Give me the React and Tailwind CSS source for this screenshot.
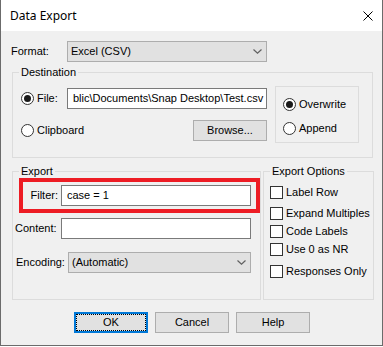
import { useState } from 'react';

// Windows-style "Data Export" dialog
const font = "font-['Liberation_Sans',Arial,sans-serif] text-[11px] leading-[13px] text-black";

const Radio = ({ checked }) => (
  <svg width="13" height="13" viewBox="0 0 13 13" className="shrink-0">
    <circle cx="6.5" cy="6.5" r="6" fill="#fff" stroke="#333" />
    {checked && <circle cx="6.5" cy="6.5" r="3.5" fill="#1a1a1a" />}
  </svg>
);

const Check = () => (
  <div className="h-[13px] w-[13px] shrink-0 border border-[#333] bg-white" />
);

const Chevron = () => (
  <svg width="9" height="5" viewBox="0 0 9 5" className="ml-auto mr-[4px] shrink-0">
    <path d="M0.5 0.5 L4.5 4.2 L8.5 0.5" fill="none" stroke="#606060" strokeWidth="1.2" />
  </svg>
);

const Combo = ({ value, className }) => (
  <div className={`flex h-[21px] items-center border border-[#adadad] bg-[#e1e1e1] pl-[3px] ${className}`}>
    <span className="whitespace-nowrap">{value}</span>
    <Chevron />
  </div>
);

const TextBox = ({ value, className }) => (
  <div className={`flex h-[21px] items-center overflow-hidden border border-[#7a7a7a] bg-white pl-[5px] ${className}`}>
    <span className="whitespace-nowrap">{value}</span>
  </div>
);

const Button = ({ children, className = '' }) => (
  <div className={`flex h-[21px] w-[74px] items-center justify-center border border-[#adadad] bg-[#e1e1e1] ${className}`}>
    {children}
  </div>
);

const CheckRow = ({ label, className }) => (
  <div className={`flex h-[13px] items-center ${className}`}>
    <Check />
    <span className="ml-[3px] whitespace-nowrap">{label}</span>
  </div>
);

export default function App() {
  const [filter] = useState('case = 1');

  return (
    <div className={`flex h-[346px] w-[383px] flex-col border-x border-b border-[#6b6b6b] bg-[#f0f0f0] ${font}`}>
      {/* title bar */}
      <div className="flex h-[31px] shrink-0 items-center bg-white pl-[9px] pr-[9px]">
        <span className="font-['Noto_Sans',sans-serif] text-[12px] leading-[16px]">Data Export</span>
        <svg width="10" height="10" viewBox="0 0 10 10" className="ml-auto">
          <path d="M0.5 0.5 L9.5 9.5 M9.5 0.5 L0.5 9.5" stroke="#000" strokeWidth="1" />
        </svg>
      </div>

      {/* format */}
      <div className="ml-[10px] mt-[10px] flex h-[21px] items-center">
        <span className="w-[56px]">Format:</span>
        <Combo value="Excel (CSV)" className="w-[200px]" />
      </div>

      {/* destination */}
      <fieldset className="ml-[11px] mt-[4px] h-[92px] w-[361px] border border-[#dcdcdc]">
        <legend className="ml-[6px] px-[2px] leading-[12px]">Destination</legend>
        <div className="flex">
          <div className="flex flex-col">
            <div className="ml-[8px] mt-[10px] flex h-[21px] items-center">
              <div className="flex w-[46px] items-center">
                <Radio checked />
                <span className="ml-[3px]">File:</span>
              </div>
              <TextBox value="blic\Documents\Snap Desktop\Test.csv" className="w-[200px]" />
            </div>
            <div className="ml-[8px] mt-[11px] flex h-[21px] items-center">
              <Radio />
              <span className="ml-[3px]">Clipboard</span>
              <Button className="ml-auto">Browse...</Button>
            </div>
          </div>
          <div className="ml-[8px] mt-[8px] flex h-[57px] w-[84px] flex-col border border-[#dcdcdc] pl-[7px] pt-[11px]">
            <div className="flex h-[13px] items-center">
              <Radio checked />
              <span className="ml-[3px]">Overwrite</span>
            </div>
            <div className="mt-[11px] flex h-[13px] items-center">
              <Radio />
              <span className="ml-[3px]">Append</span>
            </div>
          </div>
        </div>
      </fieldset>

      {/* export + options */}
      <div className="ml-[11px] mt-[7px] flex gap-[2px]">
        <fieldset className="h-[135px] w-[247px] border border-[#dcdcdc]">
          <legend className="ml-[6px] px-[2px] leading-[12px]">Export</legend>
          <div className="ml-[6px] mt-[1px] flex h-[35px] w-[241px] items-center border-4 border-[#ed1c24]">
            <span className="w-[38px] pr-[3px] text-right">Filter:</span>
            <TextBox value={filter} className="w-[190px]" />
          </div>
          <div className="mt-[5px] flex h-[21px] items-center">
            <span className="ml-[2px] w-[46px]">Content:</span>
            <TextBox value="" className="w-[190px]" />
          </div>
          <div className="mt-[13px] flex h-[21px] items-center">
            <span className="ml-[3px] w-[52px]">Encoding:</span>
            <Combo value="(Automatic)" className="w-[183px]" />
          </div>
        </fieldset>

        <fieldset className="h-[135px] w-[111px] border border-[#dcdcdc]">
          <legend className="ml-[6px] px-[2px] leading-[12px]">Export Options</legend>
          <div className="ml-[6px] flex flex-col">
            <CheckRow label="Label Row" className="mt-[9px]" />
            <CheckRow label="Expand Multiples" className="mt-[8px]" />
            <CheckRow label="Code Labels" className="mt-[5px]" />
            <CheckRow label="Use 0 as NR" className="mt-[5px]" />
            <CheckRow label="Responses Only" className="mt-[9px]" />
          </div>
        </fieldset>
      </div>

      {/* buttons */}
      <div className="ml-[73px] mt-[12px] flex gap-[7px]">
        <div className="h-[21px] w-[74px] border-2 border-[#0078d7] bg-[#e1e1e1]">
          <div className="flex h-full w-full items-center justify-center border border-dotted border-black">OK</div>
        </div>
        <Button>Cancel</Button>
        <Button>Help</Button>
      </div>
    </div>
  );
}
